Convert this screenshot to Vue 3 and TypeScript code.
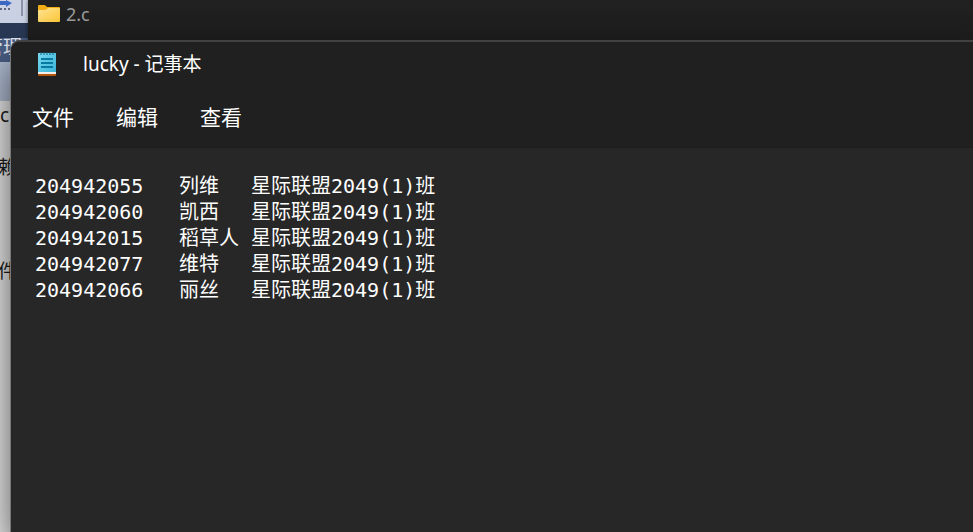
<script setup lang="ts">
import { ref } from 'vue'

interface Row { id: string; name: string; group: string }

const menus: string[] = ['文件', '编辑', '查看']
const rows: Row[] = [
  { id: '204942055', name: '列维', group: '星际联盟2049(1)班' },
  { id: '204942060', name: '凯西', group: '星际联盟2049(1)班' },
  { id: '204942015', name: '稻草人', group: '星际联盟2049(1)班' },
  { id: '204942077', name: '维特', group: '星际联盟2049(1)班' },
  { id: '204942066', name: '丽丝', group: '星际联盟2049(1)班' },
]
const content = ref(rows.map(r => [r.id, r.name, r.group].join('\t')).join('\n'))
</script>

<template>
  <div class="desktop">
    <section class="ide">
      <div class="ide-tools">
        <svg width="14" height="12" viewBox="0 0 14 12" aria-hidden="true">
          <path d="M0 1h6V0l6 3-6 4V5H0z" fill="#3c68c4" />
          <path d="M0 9h2M4 9h2M8 9h2" stroke="#5d6880" stroke-width="2" />
        </svg>
        <i class="tool-divider"></i>
      </div>
      <div class="ide-gap"></div>
      <div class="ide-tab"><span>管理</span></div>
      <div class="ide-bar"></div>
      <div class="ide-body">
        <span class="line">c<b>'</b></span>
        <span class="line han">赖</span>
        <span class="line"></span>
        <span class="line han">件</span>
      </div>
    </section>

    <section class="folder-window">
      <svg width="22" height="18" viewBox="0 0 22 18" aria-hidden="true">
        <defs>
          <linearGradient id="folder" x1="0" y1="0" x2="1" y2="1">
            <stop offset="0" stop-color="#ffe394" />
            <stop offset="1" stop-color="#fcc737" />
          </linearGradient>
        </defs>
        <path d="M0 1Q0 0 1 0h5q1 0 2 1l1 1h12q1 0 1 1v5H0z" fill="#f3ad16" />
        <path d="M0 5h7q1 0 2-1l1-1h11q1 0 1 1v12q0 1-1 1H1q-1 0-1-1z" fill="url(#folder)" />
      </svg>
      <span>2.c</span>
    </section>

    <main class="notepad">
      <header class="chrome">
        <div class="title">
          <svg width="20" height="24" viewBox="0 0 20 24" aria-hidden="true">
            <defs>
              <linearGradient id="pad" x1="0" y1="0" x2="1" y2="1">
                <stop offset="0" stop-color="#78d8ee" />
                <stop offset="1" stop-color="#3bb5d8" />
              </linearGradient>
            </defs>
            <path d="M1 19h18v4q0 1-1 1H2q-1 0-1-1z" fill="#b1560f" />
            <path d="M1 19h18v3H1z" fill="#f3eee9" />
            <path d="M1 1h18v19H1z" fill="url(#pad)" />
            <path d="M4 0v3M7 0v3M10 0v3M13 0v3M16 0v3" stroke="#0e6787" stroke-width="1" />
            <path d="M4 7h12M4 11h12M4 15h12" stroke="#0879a0" stroke-width="2" />
          </svg>
          <h1>lucky - 记事本</h1>
        </div>
        <nav class="menu">
          <button v-for="m in menus" :key="m" type="button">{{ m }}</button>
        </nav>
      </header>
      <textarea v-model="content" class="editor" aria-label="文本编辑器" spellcheck="false"></textarea>
    </main>
  </div>
</template>

<style>
body { margin: 0; }
</style>

<style scoped>
.desktop {
  position: relative;
  height: 100vh;
  overflow: hidden;
  background: #efefef;
  font-family: "Noto Sans", "Noto Sans CJK SC", sans-serif;
}
.ide { color: #1c1c1c; }
.ide-tools {
  display: flex;
  gap: 7px;
  height: 23px;
  background: #c9d1e2;
}
.tool-divider { width: 2px; height: 16px; background: #8a93a8; }
.ide-gap { height: 15px; background: #293955; }
.ide-tab {
  display: flex;
  height: 24px;
  line-height: 18px;
  font-size: 19px;
  color: #e4e8f0;
  background: #4a5f86;
}
.ide-tab span { margin-left: -16px; }
.ide-bar { height: 39px; background: #b3c0d6; }
.ide-body {
  display: flex;
  flex-direction: column;
  font-size: 19px;
}
.line { height: 52px; line-height: 28px; }
.line b { font-weight: 400; color: #a3672a; }
.han { margin-left: -2px; }
.folder-window {
  position: absolute;
  inset: 0 0 0 28px;
  display: flex;
  align-items: flex-start;
  gap: 6px;
  padding: 5px 10px;
  background: linear-gradient(#212121, #1d1d1d 40px);
  box-shadow: 0 0 4px #0008;
  color: #9c9c9c;
  font-size: 18px;
  line-height: 18px;
}
.notepad {
  position: absolute;
  inset: 40px 0 0 10px;
  display: flex;
  flex-direction: column;
  overflow: hidden;
  border-top: 2px solid #424242;
  border-left: 1px solid #777;
  border-top-left-radius: 10px;
  background: #272727;
  box-shadow: 0 20px 40px #000a;
  color: #fff;
}
.chrome {
  background: #202020;
  border-bottom: 1px solid #1d1d1d;
}
.title {
  display: flex;
  align-items: center;
  gap: 26px;
  padding: 8px 26px 0;
  height: 28px;
}
h1 { margin: 0; font-size: 19px; font-weight: 400; line-height: 28px; }
.menu { display: flex; padding: 22px 0 14px; }
button {
  width: 84px;
  height: 33px;
  padding: 0 0 0 21px;
  border: 0;
  background: none;
  color: inherit;
  font: 21px/33px "Noto Sans CJK SC", sans-serif;
  text-align: left;
}
.editor {
  flex: 1;
  padding: 25px 24px;
  border: 0;
  outline: 0;
  resize: none;
  background: #272727;
  color: #fff;
  font: 20px/26px "DejaVu Sans Mono", "Noto Sans CJK SC", monospace;
  tab-size: 72px;
}
</style>
